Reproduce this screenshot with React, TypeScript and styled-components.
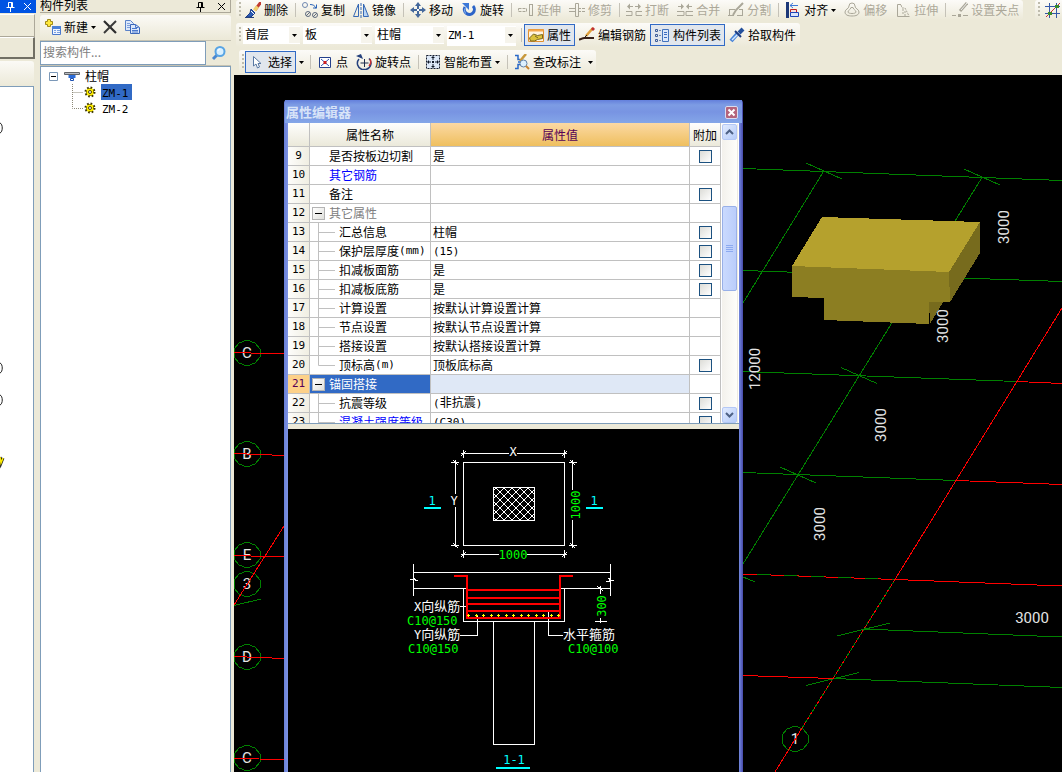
import React from 'react';
import styled, { createGlobalStyle, css } from 'styled-components';

const GlobalStyle = createGlobalStyle`
  *, *::before, *::after { box-sizing: border-box; }
  body {
    margin: 0;
    overflow: hidden;
    background: #ece9d8;
    color: #000;
    font-family: "Noto Sans CJK SC", sans-serif;
    font-size: 12px;
    line-height: 16px;
  }
  button, input, select { font: inherit; color: inherit; }
  button { margin: 0; padding: 0; border: 0; background: none; }
  svg { display: block; flex: none; }
`;

const Latin = styled.span`
  font-family: "DejaVu Sans Mono", monospace;
  font-size: 11px;
`;

function Mixed({ text }: { text: string }) {
  const parts = text.split(/([\x21-\x7e]+)/).filter(Boolean);
  return (
    <>
      {parts.map((p, i) => (/^[\x21-\x7e]/.test(p) ? <Latin key={i}>{p}</Latin> : <span key={i}>{p}</span>))}
    </>
  );
}

/* ---------- shell ---------- */

const Shell = styled.div`
  display: flex;
  height: 100vh;
  background: #ece9d8;
`;

const Main = styled.main`
  flex: 1;
  min-width: 0;
  display: flex;
  flex-direction: column;
`;

/* ---------- left strip ---------- */

const Strip = styled.aside`
  flex: none;
  width: 36px;
  display: flex;
  flex-direction: column;
`;

const StripTitle = styled.header`
  display: flex;
  align-items: center;
  justify-content: flex-end;
  gap: 8px;
  height: 13px;
  padding-right: 4px;
  background: #0054e3;
  color: #fff;
`;

const StripBox = styled.div<{ $raised?: boolean }>`
  height: ${(p) => (p.$raised ? 22 : 23)}px;
  margin-top: ${(p) => (p.$raised ? 0 : 1)}px;
  margin-right: 1px;
  border-top: 1px solid #fff;
  border-right: ${(p) => (p.$raised ? 2 : 1)}px solid ${(p) => (p.$raised ? '#716f64' : '#aca899')};
  border-bottom: ${(p) => (p.$raised ? 2 : 1)}px solid ${(p) => (p.$raised ? '#716f64' : '#aca899')};
`;

const StripBar = styled.div`
  height: 25px;
  margin: 2px 2px 0 0;
  border-radius: 0 3px 3px 0;
  background: linear-gradient(#fbfaf6, #ece9d8);
`;

const StripBody = styled.div`
  flex: 1;
  margin-right: 2px;
  border: 1px solid #7f9db9;
  border-width: 1px 1px 0 0;
  background: #fff;
`;

/* ---------- component list ---------- */

const Panel = styled.aside`
  flex: none;
  width: 198px;
  display: flex;
  flex-direction: column;
  padding: 0 3px 0 4px;
`;

const PanelTitle = styled.header`
  display: flex;
  align-items: center;
  gap: 12px;
  height: 13px;
  padding: 0 4px 0 0;
  border: 1px solid #aca899;
  border-width: 0 1px 1px 0;
  line-height: 10px;
  h2 {
    flex: 1;
    margin: 0 0 2px;
    font-size: 12px;
    line-height: 10px;
    font-weight: 400;
  }
`;

const IconButton = styled.button`
  display: flex;
  align-items: center;
  justify-content: center;
`;

const PanelTools = styled.div`
  display: flex;
  align-items: center;
  gap: 6px;
  height: 24px;
  margin-top: 2px;
  padding-left: 5px;
  border-radius: 3px;
  background: linear-gradient(#fbfaf6, #ece9d8);
`;

const NewButton = styled.button`
  display: flex;
  align-items: center;
  gap: 3px;
`;

const SearchRow = styled.div`
  display: flex;
  align-items: center;
  height: 26px;
  margin-top: 1px;
  border-top: 1px solid #c5c2b2;
  border-bottom: 1px solid #c5c2b2;
`;

const SearchInput = styled.input`
  flex: 1;
  min-width: 0;
  height: 24px;
  padding: 0 2px 4px;
  border: 1px solid #7f9db9;
  background: #fff;
  outline: none;
  &::placeholder { color: #808080; opacity: 1; }
`;

const SearchButton = styled(IconButton)`
  width: 25px;
  height: 24px;
`;

const Tree = styled.ul`
  flex: 1;
  margin: 0;
  padding: 1px 0 0 8px;
  list-style: none;
  border: 1px solid #7f9db9;
  border-bottom: 0;
  background: #fff;
`;

const TreeRow = styled.li`
  display: flex;
  align-items: center;
  height: 16px;
`;

const TreeRoot = styled.span`
  padding-left: 5px;
`;

const TreeLabel = styled.span<{ $selected?: boolean }>`
  height: 16px;
  margin-left: 5px;
  padding: 0 3px 0 1px;
  line-height: 15px;
  background: ${(p) => (p.$selected ? '#316ac5' : 'transparent')};
`;

/* ---------- toolbars ---------- */

const Toolbars = styled.div`
  flex: none;
  display: flex;
  flex-direction: column;
  gap: 3px;
  height: 75px;
  overflow: hidden;
`;

const ToolbarLine = styled.div`
  display: flex;
  gap: 10px;
`;

const Toolbar = styled.div<{ $short?: boolean; $indent?: boolean }>`
  flex: none;
  display: flex;
  align-items: center;
  height: ${(p) => (p.$short ? 20 : 24)}px;
  margin-left: ${(p) => (p.$indent ? 5 : 2)}px;
  padding-left: 3px;
  border-radius: 3px;
  background: linear-gradient(#fcfbf8, #ece9d8);
`;

const Grip = styled.span<{ $spaced?: boolean }>`
  width: 2px;
  height: 16px;
  margin-right: ${(p) => (p.$spaced ? 1 : 0)}px;
  background: repeating-linear-gradient(#bfbcad 0 2px, transparent 2px 4px);
`;

const Tool = styled.button<{ $active?: boolean }>`
  display: flex;
  align-items: center;
  gap: 3px;
  height: 22px;
  padding: 0 4px;
  white-space: nowrap;
  &:disabled { color: #aca899; }
  ${(p) =>
    p.$active &&
    css`
      padding: 0 3px;
      border: 1px solid #316ac5;
      background: #e1e6ed;
    `}
`;

const ArrowButton = styled.button`
  padding: 0 3px;
`;

const Divider = styled.span`
  width: 1px;
  height: 14px;
  margin: 0 2px 0 3px;
  background: #c5c2b8;
`;

const Combos = styled.div`
  display: flex;
  gap: 3px;
  padding: 0 2px;
`;

const Combo = styled.label<{ $narrow?: boolean }>`
  position: relative;
  width: ${(p) => (p.$narrow ? 57 : 69)}px;
  height: 18px;
  background: #fff;
`;

const Select = styled.select<{ $latin?: boolean }>`
  appearance: none;
  width: 100%;
  height: 18px;
  padding: 0 12px 2px 2px;
  border: 0;
  background: #fff;
  ${(p) =>
    p.$latin &&
    css`
      padding-left: 1px;
      font-family: "DejaVu Sans Mono", monospace;
      font-size: 11px;
    `}
`;

const ComboArrow = styled.span`
  position: absolute;
  top: 1px;
  right: 0;
  display: flex;
  align-items: center;
  justify-content: center;
  width: 11px;
  height: 16px;
  background: #f6f4ec;
  pointer-events: none;
`;

/* ---------- canvas ---------- */

const Canvas = styled.section`
  position: relative;
  flex: 1;
  min-height: 0;
  overflow: hidden;
  background: #000;
`;

const Scene = styled.svg`
  width: 100%;
  height: 100%;
`;

/* ---------- property window ---------- */

const Window = styled.section`
  position: absolute;
  top: 25px;
  left: 50px;
  bottom: 0;
  width: 459px;
  display: flex;
  flex-direction: column;
  padding: 0 4px;
  border-radius: 3px 3px 0 0;
  background: linear-gradient(90deg, #6a80d6, #7c92e4 4px, #7c92e4 454px, #6a7cd4 456px, #4648a8);
`;

const WindowTitle = styled.header`
  display: flex;
  align-items: center;
  justify-content: space-between;
  height: 23px;
  margin: 0 -3px;
  padding: 1px 4px 0 1px;
  background: linear-gradient(#6480dc, #7d9ce4 5px, #7894e2 12px, #84a6e8);
  color: #d8e4f8;
  h2 { margin: 0; font-size: 13px; line-height: 18px; font-weight: 700; }
`;

const CloseButton = styled(IconButton)`
  width: 13px;
  height: 13px;
  border: 1px solid #d8dcf0;
  border-radius: 2px;
  background: #b4647c;
`;

const GridArea = styled.div`
  display: flex;
  flex: none;
  height: 301px;
  overflow: hidden;
  background: #fff;
  border-bottom: 1px solid #7f9db9;
`;

const Grid = styled.table`
  flex: none;
  width: 433px;
  border-collapse: separate;
  border-spacing: 0;
  table-layout: fixed;
`;

const cell = css`
  padding: 0;
  border-right: 1px solid #c0c0c0;
  border-bottom: 1px solid #c0c0c0;
  white-space: nowrap;
  overflow: hidden;
`;

const HeadCell = styled.th<{ $hot?: boolean }>`
  ${cell}
  height: 24px;
  font-weight: 400;
  background: ${(p) => (p.$hot ? 'linear-gradient(#fbd9a4, #efbf5e)' : 'linear-gradient(#fefefd, #ebe9da)')};
  color: ${(p) => (p.$hot ? '#560056' : '#000')};
`;

const NumCell = styled.th<{ $hot?: boolean }>`
  ${cell}
  height: 19px;
  font: 400 11px/16px "DejaVu Sans Mono", monospace;
  background: ${(p) => (p.$hot ? '#fdd189' : 'linear-gradient(90deg, #fdfdfb, #f0eee2)')};
  color: ${(p) => (p.$hot ? '#560056' : '#000')};
`;

const NameCell = styled.td<{ $selected?: boolean; $tone?: string }>`
  ${cell}
  background: ${(p) => (p.$selected ? '#316ac5' : '#fff')};
  color: ${(p) => (p.$selected ? '#fff' : p.$tone || '#000')};
`;

const NameInner = styled.div<{ $plain?: boolean }>`
  display: flex;
  align-items: center;
  height: 18px;
  padding-left: ${(p) => (p.$plain ? 19 : 0)}px;
`;

const Toggle = styled(IconButton)`
  width: 13px;
  height: 13px;
  margin: 0 4px 0 2px;
  border: 1px solid #b4b4b4;
  background: linear-gradient(135deg, #fff, #e0e0dc);
`;

const ValueCell = styled.td<{ $selected?: boolean }>`
  ${cell}
  padding-left: 2px;
  background: ${(p) => (p.$selected ? '#dfe8f6' : '#fff')};
`;

const AttachCell = styled.td`
  ${cell}
`;

const Check = styled.input`
  appearance: none;
  display: block;
  width: 13px;
  height: 13px;
  margin: 0 auto;
  border: 1px solid #1c5180;
  background: linear-gradient(135deg, #dcdcd7, #fff);
`;

const Scrollbar = styled.div`
  flex: 1;
  display: flex;
  flex-direction: column;
  margin: 1px 1px 0 1px;
  background: linear-gradient(90deg, #f3f1ec, #fefefb);
  border-right: 1px solid #eeebe0;
`;

const ScrollButton = styled(IconButton)`
  width: 15px;
  height: 16px;
  border: 1px solid #b4c8f6;
  border-radius: 2px;
  background: linear-gradient(135deg, #e0eafe, #b6ccf9);
`;

const Track = styled.div`
  flex: 1;
  display: grid;
  grid-template-rows: 66fr 85fr 116fr;
`;

const Thumb = styled.div`
  grid-row: 2;
  display: flex;
  align-items: center;
  justify-content: center;
  width: 15px;
  border: 1px solid #98b0e8;
  border-radius: 2px;
  background: linear-gradient(90deg, #cadafe, #bacdfb);
`;

const Splitter = styled.div`
  flex: none;
  height: 5px;
  background: #ece9d8;
`;

const Drawing = styled.svg`
  flex: 1;
  width: 100%;
  min-height: 0;
  background: #000;
`;

/* ---------- icons ---------- */

const Caret = () => (
  <svg width="5" height="3" viewBox="0 0 5 3"><path d="M0 0h5L2.5 3z" fill="#000" /></svg>
);

const PinIcon = () => (
  <svg width="9" height="11" viewBox="0 0 9 11" fill="none" stroke="currentColor">
    <path d="M2.5 1.5h4v5h-4zM0.5 6.5h8M4.5 7v4M5.5 2v4" />
  </svg>
);

const CrossIcon = () => (
  <svg width="9" height="9" viewBox="0 0 9 9" stroke="currentColor"><path d="M1 1l7 7M8 1l-7 7" /></svg>
);

const I = ({ children }: { children: React.ReactNode }) => (
  <svg width="16" height="16" viewBox="0 0 16 16" fill="none">{children}</svg>
);

const NewIcon = () => (
  <I>
    <path d="M7.500 7.500h8v8h-8z" fill="#eef4ff" stroke="#4a78cc" />
    <path d="M7 7h9v3H7z" fill="#4a80d8" />
    <path d="M9 11.500h2M12 11.500h3M9 13.500h2M12 13.500h3" stroke="#7ba0e0" />
    <path d="M2.500 0.500h3v2h2v3h-2v2h-3v-2h-2v-3h2z" fill="#ffe83c" stroke="#a08a18" />
  </I>
);
const DeleteIcon = () => (
  <I><path d="M2 2l12 12" stroke="#2c2c2c" strokeWidth="2.200" /><path d="M14 2L2 14" stroke="#3a3a3a" strokeWidth="2" /></I>
);
const CopyDocIcon = () => (
  <I>
    <path d="M1.500 1.500h5l3 3v7h-8z" fill="#dce8fb" stroke="#5a82c8" />
    <path d="M3 4.500h3M3 6.500h4M3 8.500h4" stroke="#7fa0dc" />
    <path d="M6.500 5.500h5l4 3v6h-9z" fill="#dce8fb" stroke="#3b66b8" />
    <path d="M11.500 5.500v3h3M8 9.500h5M8 11.500h6M8 13h6" stroke="#4a78cc" />
  </I>
);
const SearchIcon = () => (
  <I>
    <path d="M2 14l4-4" stroke="#4a88d0" strokeWidth="3" />
    <circle cx="9" cy="6.500" r="4.500" fill="#d9f0ff" stroke="#58a4e4" strokeWidth="2" />
    <path d="M7 6a2 2 0 0 1 2-2" stroke="#fff" />
  </I>
);
const BrushIcon = () => (
  <I>
    <path d="M16 0l-6 8" stroke="#c23a30" strokeWidth="3" />
    <path d="M12.500 4.500l-3 4" stroke="#f0d070" strokeWidth="3.500" />
    <path d="M6 7l4 4-4 4H1l4-4z" fill="#2c5cb4" stroke="#1c3c88" />
    <path d="M0 15.500h9" stroke="#24407c" /><path d="M6 9l3 3" stroke="#fff" />
  </I>
);
const DuplicateIcon = () => (
  <I>
    <circle cx="3" cy="3" r="2.500" stroke="#7088b0" />
    <circle cx="6" cy="12" r="2.500" stroke="#606c80" /><path d="M4 14l4-4M11 15l4-4" stroke="#606c80" />
    <circle cx="13" cy="13" r="2.500" stroke="#606c80" />
    <path d="M8 2.500c3 0 5 1 6 4M11 6h3.500V2.500" stroke="#2c64b8" />
  </I>
);
const MirrorIcon = () => (
  <I>
    <path d="M5.500 2v12.500h-5z" stroke="#3668b4" /><path d="M10.500 2v12.500h5z" fill="#b8d4f4" stroke="#3668b4" />
    <path d="M8 1v15" stroke="#3668b4" strokeDasharray="3 1" />
  </I>
);
const MoveIcon = () => (
  <I>
    <path d="M8 2v12M2 8h12" stroke="#44689c" strokeWidth="2" />
    <path d="M8 0l3 4H5zM8 16l3-4H5zM0 8l4-3v6zM16 8l-4-3v6z" fill="#44689c" />
    <path d="M7 7h2v2H7z" fill="#fff" />
  </I>
);
const RotateIcon = () => (
  <I>
    <path d="M4 5a5 5 0 1 0 8-1" stroke="#2c64c8" strokeWidth="3" />
    <path d="M4.500 5.500a5 5 0 0 0 0 6" stroke="#8cb8f4" /><path d="M1 1h7v7z" fill="#3c78d8" />
  </I>
);
const G = '#aaa799';
const ExtendIcon = () => (
  <I><path d="M0.500 6.500h8v3h-8z" stroke={G} strokeDasharray="3 1" /><path d="M11.500 2v12M14.500 2v12M11 2.500h4M11 13.500h4" stroke={G} /></I>
);
const TrimIcon = () => (
  <I><path d="M6.500 1.500h3v13h-3zM0 6.500h6M0 9.500h6M10 6.500h2M10 9.500h2M13 6.500h3M13 9.500h3" stroke={G} /></I>
);
const BreakIcon = () => (
  <I>
    <path d="M0 9.500h6v4H0M16 9.500h-6v4h6M2 4.500h5M9 4.500h5" stroke={G} />
    <path d="M1 4.500l3-3v6zM15 4.500l-3-3v6z" fill={G} />
  </I>
);
const MergeIcon = () => (
  <I>
    <path d="M0 9.500h7v4H0M16 9.500H9v4h7M1 4.500h3M12 4.500h3" stroke={G} />
    <path d="M7 4.500l-3-3v6zM9 4.500l3-3v6z" fill={G} />
  </I>
);
const SplitIcon = () => (
  <I><path d="M1 7.500h6M11 7.500h4M0 13.500h6M9 13.500h6M1.500 7v6M14.500 7v6" stroke={G} /><path d="M15 1L8 8l-3 5" stroke={G} strokeWidth="2" /></I>
);
const AlignIcon = () => (
  <I>
    <path d="M2.500 0v16" stroke="#1c3878" strokeWidth="3" />
    <path d="M5 3.500h8M8 1L5 3.500 8 6" stroke="#3c78d8" /><path d="M5.500 7.500h6v3h-6z" fill="#f8dede" stroke="#c02020" />
    <path d="M5.500 10.500h8v4h-8z" fill="#d8e4fc" stroke="#1c44b8" />
  </I>
);
const OffsetIcon = () => (
  <I><path d="M1 10c0-3 4-3 4-6a3 3 0 0 1 6 0c0 3 4 3 4 6s-3 4-7 4-7-1-7-4z" stroke={G} /><path d="M4 10c0-2 2.500-2 3-4.500h2C9.500 8 12 8 12 10s-8 2-8 0z" stroke={G} /></I>
);
const StretchIcon = () => (
  <I><path d="M6 2.500H2.500v12h12" stroke={G} /><path d="M6 3l1 3h3l4 8M8 7v6M10 9v5" stroke={G} strokeDasharray="2 1" /></I>
);
const GripPointIcon = () => (
  <I><path d="M0 13.500h4M11 13.500h5" stroke={G} /><path d="M6 12h3v3H6z" fill={G} /><path d="M15 1l-7 8" stroke={G} strokeWidth="3" /><path d="M15 1l-6 7" stroke="#eee" /></I>
);
const AxisIcon = () => (
  <I>
    <path d="M4.500 1v15M11.500 1v15M0 4.500h15M0 11.500h15" stroke="#3458a8" />
    <path d="M1 15L15 1" stroke="#d03030" /><path d="M3 10h4v3H3zM10 3h4v3h-4z" fill="#3c8c28" />
  </I>
);
const PropsIcon = () => (
  <I>
    <path d="M0.500 2.500h15v12h-15z" fill="#fff4e0" stroke="#e09030" />
    <path d="M0.500 2.500h15v2h-15z" fill="#f4a84c" />
    <path d="M1.500 11l4-4 4 1.500 5-1v4l-5 1-3 1.500h-4z" fill="#dcc23c" stroke="#786820" />
    <path d="M7 9l3 2" stroke="#786820" />
  </I>
);
const EditRebarIcon = () => (
  <I>
    <path d="M14 1L7 9" stroke="#e0a03c" strokeWidth="2.500" /><path d="M15 1l-2 2" stroke="#c03030" strokeWidth="3" />
    <path d="M8 8l-3 3" stroke="#222" /><path d="M0 12.500c3 0 3-2 6-1.500h9" stroke="#382018" strokeWidth="2" />
  </I>
);
const ListIcon = () => (
  <I>
    <path d="M1.500 2.500h2v2h-2zM1.500 7.500h2v2h-2zM1.500 12.500h2v2h-2z" stroke="#3c5c98" />
    <path d="M5 3.500h2M5 8.500h2M5 13.500h2" stroke="#7088b0" />
    <path d="M8.500 2.500h6v12h-6z" fill="#dce8fb" stroke="#4474bc" /><path d="M10 5.500h3M10 7.500h3M10 10.500h3" stroke="#3c6cc0" />
  </I>
);
const PipetteIcon = () => (
  <I>
    <path d="M2 14L9 6" stroke="#4884d8" strokeWidth="4" /><path d="M3 13l6-6" stroke="#d4e8ff" strokeWidth="1.500" />
    <path d="M6 4l6 6" stroke="#1c3c80" strokeWidth="2" /><path d="M10 6l4-4" stroke="#24509c" strokeWidth="4" />
  </I>
);
const PointerIcon = () => (
  <I><path d="M4.500 2.500v9.500l2.500-2 1.500 4 2-1-1.500-3.500h3z" fill="#fff" stroke="#5878a4" /></I>
);
const PointIcon = () => (
  <I><path d="M2.500 3.500h11v10h-11z" fill="#fff" stroke="#24408c" /><path d="M4 5l8 7M12 5l-8 7" stroke="#3054b0" /><path d="M6.500 7h3v3h-3z" fill="#d02020" /></I>
);
const RotatePointIcon = () => (
  <I>
    <path d="M8.500 5v8M4.500 9h8" stroke="#1c2c4c" />
    <path d="M3 5a6.500 6.500 0 0 0 3 10.500h4a6.500 6.500 0 0 0 3-11" stroke="#24407c" strokeWidth="1.500" />
    <path d="M0 2l5-2 2 5z" fill="#24407c" /><path d="M13 12c2-2 2-5 1-7" stroke="#c83030" strokeWidth="1.500" />
  </I>
);
const SmartIcon = () => (
  <I>
    <path d="M1.500 1.500h13v13h-13z" fill="#dce8f8" stroke="#141c30" strokeDasharray="2 1" />
    <path d="M8 3v3M8 10v3M3 8h3M10 8h3" stroke="#101828" />
    <path d="M8 2l2 2H6zM8 14l2-2H6zM2 8l2-2v4zM14 8l-2-2v4zM7 7h2v2H7z" fill="#101828" />
  </I>
);
const AnnotIcon = () => (
  <I>
    <path d="M1 1.500h3v4h2M1 14.500h3v-4h2M4 8h2" stroke="#2868c8" strokeWidth="1.500" />
    <path d="M12 0L6 7" stroke="#c8983c" strokeWidth="2.500" /><circle cx="9.500" cy="9.500" r="3.500" fill="#dcf0ff" stroke="#6080a8" />
    <path d="M12 12l3 3" stroke="#c88430" strokeWidth="2" />
  </I>
);
const CapIcon = () => (
  <I><path d="M0.500 4.500h15v2h-15z" fill="#b8bcc4" stroke="#606468" /><path d="M4.500 7h7v3h-7z" fill="#2c6cd8" /><path d="M6.500 10.500h3v2h-3z" fill="#fff" stroke="#1c50b0" /></I>
);
const GearIcon = () => (
  <svg width="12" height="12" viewBox="0 0 12 12" fill="none">
    <circle cx="6" cy="6" r="4" fill="#ffee00" stroke="#3c3400" strokeWidth="3" strokeDasharray="1.500 1.640" />
    <circle cx="6" cy="6" r="3.500" fill="#ffee00" /><circle cx="6" cy="6" r="1.500" fill="#fff" stroke="#4c4400" />
    <path d="M6 2v1M6 9v1M2 6h1M9 6h1" stroke="#4c4400" />
  </svg>
);
const Minus = ({ framed }: { framed?: boolean }) => (
  <svg width="9" height="9" viewBox="0 0 9 9" fill="none">
    {framed && <path d="M0.500 0.500h8v8h-8z" fill="#fff" stroke="#7b98b8" />}
    <path d={framed ? 'M2 4.500h5' : 'M1 4.500h7'} stroke="#000" />
  </svg>
);
const TreeBranch = ({ last }: { last?: boolean }) => (
  <svg width="35" height="16" viewBox="0 0 35 16" fill="none">
    <path d={last ? 'M23.500 0v8.500H34' : 'M23.500 0v16M23.500 8.500H34'} stroke="#8c8876" strokeDasharray="1 1" />
  </svg>
);
const Chevron = ({ down }: { down?: boolean }) => (
  <svg width="9" height="6" viewBox="0 0 9 6" fill="none">
    <path d={down ? 'M1 1l3.500 3.500L8 1' : 'M1 5l3.500-3.500L8 5'} stroke="#4d6185" strokeWidth="2" />
  </svg>
);

/* ---------- data ---------- */

type ToolItem = { label: string; icon: React.ReactNode; off?: boolean; menu?: boolean } | null;

const editTools: ToolItem[] = [
  { label: '删除', icon: <BrushIcon /> },
  null,
  { label: '复制', icon: <DuplicateIcon /> },
  { label: '镜像', icon: <MirrorIcon /> },
  null,
  { label: '移动', icon: <MoveIcon /> },
  { label: '旋转', icon: <RotateIcon /> },
  null,
  { label: '延伸', icon: <ExtendIcon />, off: true },
  { label: '修剪', icon: <TrimIcon />, off: true },
  null,
  { label: '打断', icon: <BreakIcon />, off: true },
  { label: '合并', icon: <MergeIcon />, off: true },
  { label: '分割', icon: <SplitIcon />, off: true },
  null,
  { label: '对齐', icon: <AlignIcon />, menu: true },
  { label: '偏移', icon: <OffsetIcon />, off: true },
  { label: '拉伸', icon: <StretchIcon />, off: true },
  null,
  { label: '设置夹点', icon: <GripPointIcon />, off: true },
];

type Kind = 'plain' | 'group' | 'child' | 'last';
type Row = { n: number; name: string; value?: string; kind: Kind; check?: boolean; tone?: string; selected?: boolean };

const rows: Row[] = [
  { n: 9, name: '是否按板边切割', value: '是', kind: 'plain', check: true },
  { n: 10, name: '其它钢筋', kind: 'plain', tone: '#0000ff' },
  { n: 11, name: '备注', kind: 'plain', check: true },
  { n: 12, name: '其它属性', kind: 'group', tone: '#808080' },
  { n: 13, name: '汇总信息', value: '柱帽', kind: 'child', check: true },
  { n: 14, name: '保护层厚度(mm)', value: '(15)', kind: 'child', check: true },
  { n: 15, name: '扣减板面筋', value: '是', kind: 'child', check: true },
  { n: 16, name: '扣减板底筋', value: '是', kind: 'child', check: true },
  { n: 17, name: '计算设置', value: '按默认计算设置计算', kind: 'child' },
  { n: 18, name: '节点设置', value: '按默认节点设置计算', kind: 'child' },
  { n: 19, name: '搭接设置', value: '按默认搭接设置计算', kind: 'child' },
  { n: 20, name: '顶标高(m)', value: '顶板底标高', kind: 'last', check: true },
  { n: 21, name: '锚固搭接', kind: 'group', selected: true },
  { n: 22, name: '抗震等级', value: '(非抗震)', kind: 'child', check: true },
  { n: 23, name: '混凝土强度等级', value: '(C30)', kind: 'child', check: true, tone: '#0000ff' },
];

/* ---------- drawings ---------- */

const GREEN = '#008000';
const RED = '#ff0000';

const bubbles: [number, number, string][] = [
  [247, 353, 'C'], [247, 454, 'B'], [247, 555, 'E'], [247, 584, '3'], [247, 657, 'D'], [247, 758, 'C'], [795, 739, '1'],
];

const spans: [number, number, string, boolean][] = [
  [1004, 227, '3000', true], [943, 326, '3000', true], [755, 369, '12000', true],
  [881, 425, '3000', true], [820, 524, '3000', true], [1032, 618, '3000', false],
];

function ModelView() {
  return (
    <Scene role="img" aria-label="三维视图">
      <g transform="translate(-234 -75)" fill="none">
        <g stroke={GREEN} shapeRendering="crispEdges">
          <path d="M743 168.500L1062 180.500M743 270.500L1062 281.500M743 371.500L1017 381.500M743 472.500L956 480.500M743 574L895 579.500M863 629L1062 637M833 678.500L1062 687.500" />
          <path d="M806 163L842 179M964 169L1000 185M841 367.500L877 383.500M780 467L816 483M743 577L755 582M837 636L890 623M806 685.500L859 672.500" />
          <path d="M823.500 171.500L743 303M982 177.500L859 376L743 564M895 579.500L802 728M234 605.500L261 599" />
          {bubbles.map(([x, y], i) => (
            <path key={i} d={`M${x} ${y - 13}l8 3l5 6v8l-5 6l-8 3l-8 -3l-5 -6v-8l5 -6z`} />
          ))}
        </g>
        <g shapeRendering="crispEdges">
          <path d="M822 217L980 222L949 272L792 266z" fill="#b5a12d" />
          <path d="M980 222V253L950 302L949 272zM929 302H943L930 324z" fill="#776b1d" />
          <path d="M792 266L949 272L950 302H929V324L824 320V298L792 297z" fill="#8c7e22" />
        </g>
        <g fontFamily="Roboto, sans-serif" fontSize="15" fill="#e4e4e4" textAnchor="middle">
          {bubbles.map(([x, y, t], i) => (
            <text key={i} x={x} y={y + 5}>{t}</text>
          ))}
          {spans.map(([x, y, t, turned], i) => (
            <text key={i} x={x} y={y + 5} transform={turned ? `rotate(-90 ${x} ${y})` : undefined}>{t}</text>
          ))}
        </g>
        <g stroke={RED} shapeRendering="crispEdges">
          <path d="M1017 381.500L1062 383.500M956 480.500L1062 484.500M895 579.500L1062 586M743 675.500L833 678.500" />
          <path d="M1062 308L1000 409L895 579.500M802 728L775 772M284 526L234 605" />
          <path d="M234 352.500L284 354M234 453.500L284 455.500M234 555.500L284 557M234 656.500L284 658.500M234 758.500L284 759.500" />
          <path d="M743 574L895 579.500" strokeDasharray="14 13" />
          <path d="M895 579.500L802 728" strokeDasharray="3 3" />
        </g>
      </g>
    </Scene>
  );
}

const MONO = '"DejaVu Sans Mono", monospace';

function SectionView() {
  const dots = Array.from({ length: 13 }, (_, i) => 468 + Math.round(i * 7.5));
  return (
    <Drawing role="img" aria-label="柱帽详图">
      <defs>
        <pattern id="hatch" width="8" height="8" patternUnits="userSpaceOnUse">
          <path d="M0 0l8 8M8 0l-8 8" stroke="#fff" />
        </pattern>
      </defs>
      <g transform="translate(-288 -429)" fill="none">
        <g stroke="#fff" shapeRendering="crispEdges">
          <path d="M463.500 462.500h101v83h-101z" />
          <path d="M493.500 487.500h41v33h-41z" fill="url(#hatch)" />
          <path d="M461 453.500h48M517 453.500h50M463.500 450v8M564.500 450v8M461 456l5-5M562 456l5-5" />
          <path d="M461 554.500h38M527 554.500h40M463.500 550v8M564.500 550v8M461 557l5-5M562 557l5-5" />
          <path d="M455.500 460v34M455.500 507v40M451 462.500h8M451 545.500h8M453 460l5 5M453 543l5 5" />
          <path d="M572.500 460v30M572.500 520v28M569 462.500h8M569 545.500h8M570 460l5 5M570 543l5 5" />
          <path d="M413.500 564v32M610.500 564v32M413 572.500h198M413 588.500h53M561 588.500h50" />
          <path d="M410 579.500h4l-1-2 3 3h2M606 581.500h4l-1-3 3 2h2" />
          <path d="M463.500 588v33.500h101V588M493.500 621v123.500h41V621" />
          <path d="M600.500 586v8M600.500 618v5M595 588.500h10M595 621.500h12M597 586l6 5" />
          <path d="M460 606.500h6M460 635.500h17.500V615M563 635.500h-14.500V611" />
        </g>
        <g stroke={RED} strokeWidth="2" shapeRendering="crispEdges">
          <path d="M454 576h13v42h93v-42h13M467 590h93M467 598h93M467 604h93M467 611h93" />
        </g>
        {dots.map((x) => (
          <path key={x} d={`M${x - 1} 615.500h3M${x + 0.5} 614v3`} stroke="#ff0" shapeRendering="crispEdges" />
        ))}
        <path d="M424 508h17M586 508h17M496 768h34" stroke="#0ff" strokeWidth="2" shapeRendering="crispEdges" />
        <g fill="#fff" fontFamily='"Noto Sans CJK SC", sans-serif' fontSize="12">
          <text x="513" y="456" textAnchor="middle" fontFamily={MONO}>X</text>
          <text x="454" y="505" textAnchor="middle" fontFamily={MONO}>Y</text>
          <text x="414" y="611"><tspan fontFamily={MONO}>X</tspan><tspan fontSize="13">向纵筋</tspan></text>
          <text x="414" y="639"><tspan fontFamily={MONO}>Y</tspan><tspan fontSize="13">向纵筋</tspan></text>
          <text x="563" y="639" fontSize="13">水平箍筋</text>
        </g>
        <g fill="#0f0" fontFamily={MONO} fontSize="12">
          <text x="407" y="625">C10@150</text>
          <text x="408" y="653">C10@150</text>
          <text x="568" y="653">C10@100</text>
          <text x="513" y="559" textAnchor="middle">1000</text>
          <text x="580" y="505" textAnchor="middle" transform="rotate(-90 580 505)">1000</text>
          <text x="606" y="606" textAnchor="middle" transform="rotate(-90 606 606)">300</text>
        </g>
        <g fill="#0ff" fontFamily={MONO} fontSize="12" textAnchor="middle">
          <text x="432" y="505">1</text>
          <text x="594" y="505">1</text>
          <text x="514" y="764">1-1</text>
        </g>
      </g>
    </Drawing>
  );
}

/* ---------- parts ---------- */

function LeftStrip() {
  return (
    <Strip>
      <StripTitle>
        <IconButton aria-label="固定"><PinIcon /></IconButton>
        <IconButton aria-label="关闭"><CrossIcon /></IconButton>
      </StripTitle>
      <StripBox />
      <StripBox $raised />
      <StripBar />
      <StripBody>
        <svg width="33" height="400" viewBox="0 0 33 400" fill="none" aria-hidden="true">
          <path d="M0 36c3 1 3 9 0 10M0 276c3 1 3 9 0 10M0 308c3 1 3 9 0 10" stroke="#222" />
          <path d="M0 370l1 6 2-5" stroke="#222" strokeWidth="3" /><path d="M0 370l1 6 2-5" stroke="#fe0" strokeWidth="1.500" />
        </svg>
      </StripBody>
    </Strip>
  );
}

function ComponentList() {
  return (
    <Panel>
      <PanelTitle>
        <h2>构件列表</h2>
        <IconButton aria-label="固定"><PinIcon /></IconButton>
        <IconButton aria-label="关闭"><CrossIcon /></IconButton>
      </PanelTitle>
      <PanelTools>
        <NewButton><NewIcon /><span>新建</span><Caret /></NewButton>
        <IconButton aria-label="删除"><DeleteIcon /></IconButton>
        <IconButton aria-label="复制"><CopyDocIcon /></IconButton>
      </PanelTools>
      <SearchRow>
        <SearchInput type="text" placeholder="搜索构件..." aria-label="搜索构件" />
        <SearchButton aria-label="搜索"><SearchIcon /></SearchButton>
      </SearchRow>
      <Tree>
        <TreeRow>
          <IconButton aria-label="折叠"><Minus framed /></IconButton>
          <svg width="6" height="16" viewBox="0 0 6 16" aria-hidden="true" />
          <CapIcon />
          <TreeRoot>柱帽</TreeRoot>
        </TreeRow>
        <TreeRow><TreeBranch /><GearIcon /><TreeLabel $selected><Latin>ZM-1</Latin></TreeLabel></TreeRow>
        <TreeRow><TreeBranch last /><GearIcon /><TreeLabel><Latin>ZM-2</Latin></TreeLabel></TreeRow>
      </Tree>
    </Panel>
  );
}

function ComboBox({ label, value, narrow, latin }: { label: string; value: string; narrow?: boolean; latin?: boolean }) {
  return (
    <Combo $narrow={narrow}>
      <Select aria-label={label} defaultValue={value} $latin={latin}><option>{value}</option></Select>
      <ComboArrow><Caret /></ComboArrow>
    </Combo>
  );
}

function TopBars() {
  return (
    <Toolbars>
      <ToolbarLine>
        <Toolbar $short>
          <Grip />
          {editTools.map((t, i) =>
            t ? (
              <Tool key={i} disabled={t.off}>{t.icon}<span>{t.label}</span>{t.menu && <Caret />}</Tool>
            ) : (
              <Divider key={i} />
            ),
          )}
        </Toolbar>
        <Toolbar $short><Grip $spaced /><Tool aria-label="轴网"><AxisIcon /></Tool></Toolbar>
      </ToolbarLine>
      <ToolbarLine>
        <Toolbar>
          <Grip />
          <Combos>
            <ComboBox label="楼层" value="首层" narrow />
            <ComboBox label="类别" value="板" />
            <ComboBox label="类型" value="柱帽" />
            <ComboBox label="构件" value="ZM-1" latin />
          </Combos>
          <Divider />
          <Tool $active><PropsIcon /><span>属性</span></Tool>
          <Tool><EditRebarIcon /><span>编辑钢筋</span></Tool>
          <Tool $active><ListIcon /><span>构件列表</span></Tool>
          <Tool><PipetteIcon /><span>拾取构件</span></Tool>
        </Toolbar>
      </ToolbarLine>
      <ToolbarLine>
        <Toolbar $indent>
          <Grip $spaced />
          <Tool $active><PointerIcon /><span>选择</span></Tool>
          <ArrowButton aria-label="选择方式"><Caret /></ArrowButton>
          <Divider />
          <Tool><PointIcon /><span>点</span></Tool>
          <Tool><RotatePointIcon /><span>旋转点</span></Tool>
          <Divider />
          <Tool><SmartIcon /><span>智能布置</span><Caret /></Tool>
          <Divider />
          <Tool><AnnotIcon /><span>查改标注</span></Tool>
          <ArrowButton aria-label="标注选项"><Caret /></ArrowButton>
        </Toolbar>
      </ToolbarLine>
    </Toolbars>
  );
}

function NameContent({ row }: { row: Row }) {
  if (row.kind === 'plain') return <NameInner $plain><Mixed text={row.name} /></NameInner>;
  if (row.kind === 'group') {
    return <NameInner><Toggle aria-label={`折叠${row.name}`}><Minus /></Toggle><Mixed text={row.name} /></NameInner>;
  }
  return (
    <NameInner>
      <svg width="29" height="19" viewBox="0 0 29 19" fill="none" aria-hidden="true">
        <path d={row.kind === 'last' ? 'M8.500 0v9.500H25' : 'M8.500 0v19M8.500 9.500H25'} stroke="#c0c0c0" />
      </svg>
      <Mixed text={row.name} />
    </NameInner>
  );
}

function PropertyWindow() {
  return (
    <Window>
      <WindowTitle>
        <h2>属性编辑器</h2>
        <CloseButton aria-label="关闭">
          <svg width="9" height="9" viewBox="0 0 9 9"><path d="M1.500 1.500l6 6M7.500 1.500l-6 6" stroke="#fff" strokeWidth="2" /></svg>
        </CloseButton>
      </WindowTitle>
      <GridArea>
        <Grid>
          <colgroup><col width="22" /><col width="121" /><col width="259" /><col width="31" /></colgroup>
          <thead>
            <tr>
              <HeadCell scope="col" aria-label="序号" />
              <HeadCell scope="col">属性名称</HeadCell>
              <HeadCell scope="col" $hot>属性值</HeadCell>
              <HeadCell scope="col">附加</HeadCell>
            </tr>
          </thead>
          <tbody>
            {rows.map((r) => (
              <tr key={r.n}>
                <NumCell scope="row" $hot={r.selected}>{r.n}</NumCell>
                <NameCell $selected={r.selected} $tone={r.tone}><NameContent row={r} /></NameCell>
                <ValueCell $selected={r.selected}>{r.value && <Mixed text={r.value} />}</ValueCell>
                <AttachCell>{r.check && <Check type="checkbox" aria-label={`附加 ${r.name}`} />}</AttachCell>
              </tr>
            ))}
          </tbody>
        </Grid>
        <Scrollbar>
          <ScrollButton aria-label="向上"><Chevron /></ScrollButton>
          <Track>
            <Thumb>
              <svg width="7" height="8" viewBox="0 0 7 8"><path d="M0 .5h7M0 2.500h7M0 4.500h7M0 6.500h7" stroke="#8caaf0" /></svg>
            </Thumb>
          </Track>
          <ScrollButton aria-label="向下"><Chevron down /></ScrollButton>
        </Scrollbar>
      </GridArea>
      <Splitter />
      <SectionView />
    </Window>
  );
}

export default function App() {
  return (
    <>
      <GlobalStyle />
      <Shell>
        <LeftStrip />
        <ComponentList />
        <Main>
          <TopBars />
          <Canvas>
            <ModelView />
            <PropertyWindow />
          </Canvas>
        </Main>
      </Shell>
    </>
  );
}
